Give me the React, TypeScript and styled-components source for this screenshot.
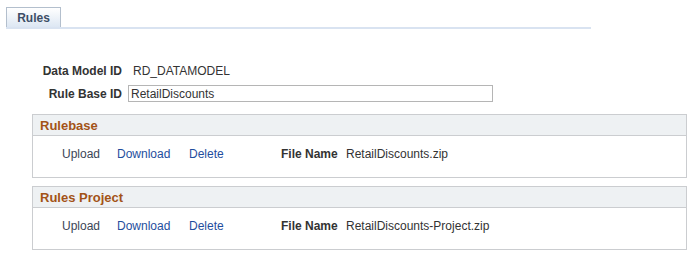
import React from "react";
import styled, { createGlobalStyle } from "styled-components";

const GlobalStyle = createGlobalStyle`
  html, body {
    margin: 0;
    padding: 0;
    background: #ffffff;
    font-family: "Liberation Sans", Arial, sans-serif;
    font-size: 12px;
    color: #333333;
  }
`;

const Page = styled.div`
  width: 695px;
  height: 258px;
  padding-top: 7px;
  box-sizing: border-box;
`;

const TabBar = styled.div`
  display: flex;
  margin-left: 6px;
  width: 585px;
  border-bottom: 2px solid #d9e3f1;
`;

const Tab = styled.div`
  width: 55px;
  height: 20px;
  box-sizing: border-box;
  border: 1px solid #b3bfcd;
  border-bottom: none;
  background: linear-gradient(#ffffff, #dde7f3);
  font-weight: bold;
  font-size: 12px;
  color: #3d4e66;
  display: flex;
  align-items: center;
  justify-content: center;
`;

const Form = styled.div`
  display: grid;
  grid-template-columns: 90px 1fr;
  column-gap: 6px;
  row-gap: 7px;
  margin: 35px 0 0 32px;
  align-items: center;
`;

const Label = styled.div`
  font-weight: bold;
  color: #333333;
  text-align: right;
  white-space: nowrap;
`;

const Value = styled.div`
  padding-left: 5px;
  color: #333333;
`;

const TextInput = styled.input`
  width: 365px;
  height: 17px;
  box-sizing: border-box;
  border: 1px solid #b5b5b5;
  padding: 0 2px;
  font-family: "Liberation Sans", Arial, sans-serif;
  font-size: 12px;
  color: #333333;
  outline: none;
`;

const Panel = styled.div<{ $top: number }>`
  margin: ${(p) => p.$top}px 0 0 32px;
  width: 655px;
  box-sizing: border-box;
  border: 1px solid #cbcdd0;
`;

const PanelHeader = styled.div`
  height: 21px;
  box-sizing: border-box;
  background: #eef1f3;
  border-bottom: 1px solid #cbcdd0;
  padding-left: 7px;
  font-weight: bold;
  font-size: 13px;
  color: #a35317;
  display: flex;
  align-items: center;
`;

const PanelBody = styled.div`
  height: 41px;
  display: flex;
  align-items: center;
  padding-left: 29px;
  padding-bottom: 6px;
  box-sizing: border-box;
`;

const Action = styled.a<{ $muted?: boolean; $w: number }>`
  width: ${(p) => p.$w}px;
  color: ${(p) => (p.$muted ? "#3b4657" : "#1f4e9e")};
  text-decoration: none;
  cursor: pointer;
`;

const FileLabel = styled.span`
  font-weight: bold;
  color: #333333;
  width: 65px;
`;

const FileValue = styled.span`
  color: #333333;
`;

const files = [
  { title: "Rulebase", file: "RetailDiscounts.zip", top: 12 },
  { title: "Rules Project", file: "RetailDiscounts-Project.zip", top: 8 },
];

export default function App() {
  return (
    <Page>
      <GlobalStyle />
      <TabBar>
        <Tab>Rules</Tab>
      </TabBar>
      <Form>
        <Label>Data Model ID</Label>
        <Value>RD_DATAMODEL</Value>
        <Label>Rule Base ID</Label>
        <div>
          <TextInput defaultValue="RetailDiscounts" />
        </div>
      </Form>
      {files.map((f) => (
        <Panel key={f.title} $top={f.top}>
          <PanelHeader>{f.title}</PanelHeader>
          <PanelBody>
            <Action $muted $w={55}>Upload</Action>
            <Action $w={72}>Download</Action>
            <Action $w={92}>Delete</Action>
            <FileLabel>File Name</FileLabel>
            <FileValue>{f.file}</FileValue>
          </PanelBody>
        </Panel>
      ))}
    </Page>
  );
}
